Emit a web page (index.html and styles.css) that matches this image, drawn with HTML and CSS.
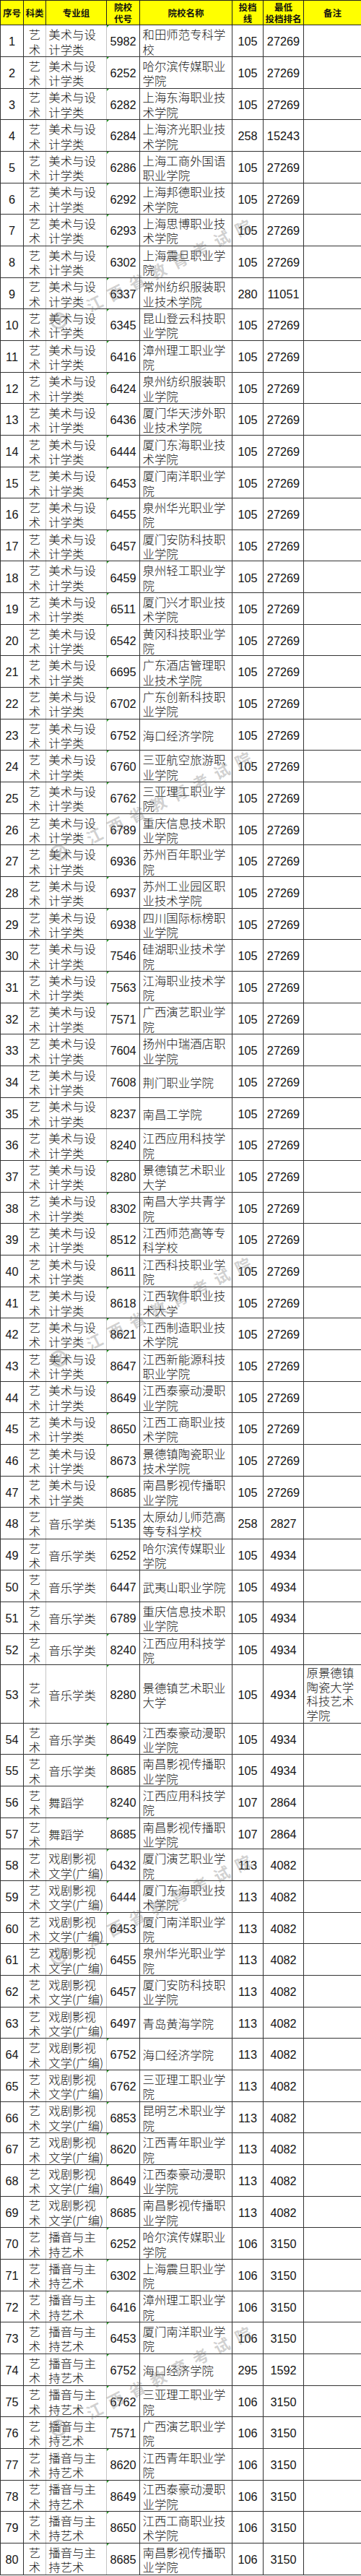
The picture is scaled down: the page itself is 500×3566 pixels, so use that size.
FILE: index.html
```html
<!DOCTYPE html>
<html lang="zh-CN">
<head>
<meta charset="utf-8">
<title>投档线</title>
<link rel="stylesheet" href="styles.css">
</head>
<body>
<div class="sheet">
<table class="grid">
<colgroup>
<col class="c1"><col class="c2"><col class="c3"><col class="c4"><col class="c5"><col class="c6"><col class="c7"><col class="c8">
</colgroup>
<thead>
<tr><th>序号</th><th>科类</th><th>专业组</th><th>院校<br>代号</th><th>院校名称</th><th>投档<br>线</th><th>最低<br>投档排名</th><th>备注</th></tr>
</thead>
<tbody>
<tr><td>1</td><td>艺术</td><td>美术与设计学类</td><td>5982</td><td>和田师范专科学校</td><td>105</td><td>27269</td><td></td></tr>
<tr><td>2</td><td>艺术</td><td>美术与设计学类</td><td>6252</td><td>哈尔滨传媒职业学院</td><td>105</td><td>27269</td><td></td></tr>
<tr><td>3</td><td>艺术</td><td>美术与设计学类</td><td>6282</td><td>上海东海职业技术学院</td><td>105</td><td>27269</td><td></td></tr>
<tr><td>4</td><td>艺术</td><td>美术与设计学类</td><td>6284</td><td>上海济光职业技术学院</td><td>258</td><td>15243</td><td></td></tr>
<tr><td>5</td><td>艺术</td><td>美术与设计学类</td><td>6286</td><td>上海工商外国语职业学院</td><td>105</td><td>27269</td><td></td></tr>
<tr><td>6</td><td>艺术</td><td>美术与设计学类</td><td>6292</td><td>上海邦德职业技术学院</td><td>105</td><td>27269</td><td></td></tr>
<tr><td>7</td><td>艺术</td><td>美术与设计学类</td><td>6293</td><td>上海思博职业技术学院</td><td>105</td><td>27269</td><td></td></tr>
<tr><td>8</td><td>艺术</td><td>美术与设计学类</td><td>6302</td><td>上海震旦职业学院</td><td>105</td><td>27269</td><td></td></tr>
<tr><td>9</td><td>艺术</td><td>美术与设计学类</td><td>6337</td><td>常州纺织服装职业技术学院</td><td>280</td><td>11051</td><td></td></tr>
<tr><td>10</td><td>艺术</td><td>美术与设计学类</td><td>6345</td><td>昆山登云科技职业学院</td><td>105</td><td>27269</td><td></td></tr>
<tr><td>11</td><td>艺术</td><td>美术与设计学类</td><td>6416</td><td>漳州理工职业学院</td><td>105</td><td>27269</td><td></td></tr>
<tr><td>12</td><td>艺术</td><td>美术与设计学类</td><td>6424</td><td>泉州纺织服装职业学院</td><td>105</td><td>27269</td><td></td></tr>
<tr><td>13</td><td>艺术</td><td>美术与设计学类</td><td>6436</td><td>厦门华天涉外职业技术学院</td><td>105</td><td>27269</td><td></td></tr>
<tr><td>14</td><td>艺术</td><td>美术与设计学类</td><td>6444</td><td>厦门东海职业技术学院</td><td>105</td><td>27269</td><td></td></tr>
<tr><td>15</td><td>艺术</td><td>美术与设计学类</td><td>6453</td><td>厦门南洋职业学院</td><td>105</td><td>27269</td><td></td></tr>
<tr><td>16</td><td>艺术</td><td>美术与设计学类</td><td>6455</td><td>泉州华光职业学院</td><td>105</td><td>27269</td><td></td></tr>
<tr><td>17</td><td>艺术</td><td>美术与设计学类</td><td>6457</td><td>厦门安防科技职业学院</td><td>105</td><td>27269</td><td></td></tr>
<tr><td>18</td><td>艺术</td><td>美术与设计学类</td><td>6459</td><td>泉州轻工职业学院</td><td>105</td><td>27269</td><td></td></tr>
<tr><td>19</td><td>艺术</td><td>美术与设计学类</td><td>6511</td><td>厦门兴才职业技术学院</td><td>105</td><td>27269</td><td></td></tr>
<tr><td>20</td><td>艺术</td><td>美术与设计学类</td><td>6542</td><td>黄冈科技职业学院</td><td>105</td><td>27269</td><td></td></tr>
<tr><td>21</td><td>艺术</td><td>美术与设计学类</td><td>6695</td><td>广东酒店管理职业技术学院</td><td>105</td><td>27269</td><td></td></tr>
<tr><td>22</td><td>艺术</td><td>美术与设计学类</td><td>6702</td><td>广东创新科技职业学院</td><td>105</td><td>27269</td><td></td></tr>
<tr><td>23</td><td>艺术</td><td>美术与设计学类</td><td>6752</td><td>海口经济学院</td><td>105</td><td>27269</td><td></td></tr>
<tr><td>24</td><td>艺术</td><td>美术与设计学类</td><td>6760</td><td>三亚航空旅游职业学院</td><td>105</td><td>27269</td><td></td></tr>
<tr><td>25</td><td>艺术</td><td>美术与设计学类</td><td>6762</td><td>三亚理工职业学院</td><td>105</td><td>27269</td><td></td></tr>
<tr><td>26</td><td>艺术</td><td>美术与设计学类</td><td>6789</td><td>重庆信息技术职业学院</td><td>105</td><td>27269</td><td></td></tr>
<tr><td>27</td><td>艺术</td><td>美术与设计学类</td><td>6936</td><td>苏州百年职业学院</td><td>105</td><td>27269</td><td></td></tr>
<tr><td>28</td><td>艺术</td><td>美术与设计学类</td><td>6937</td><td>苏州工业园区职业技术学院</td><td>105</td><td>27269</td><td></td></tr>
<tr><td>29</td><td>艺术</td><td>美术与设计学类</td><td>6938</td><td>四川国际标榜职业学院</td><td>105</td><td>27269</td><td></td></tr>
<tr><td>30</td><td>艺术</td><td>美术与设计学类</td><td>7546</td><td>硅湖职业技术学院</td><td>105</td><td>27269</td><td></td></tr>
<tr><td>31</td><td>艺术</td><td>美术与设计学类</td><td>7563</td><td>江海职业技术学院</td><td>105</td><td>27269</td><td></td></tr>
<tr><td>32</td><td>艺术</td><td>美术与设计学类</td><td>7571</td><td>广西演艺职业学院</td><td>105</td><td>27269</td><td></td></tr>
<tr class="nm"><td>33</td><td>艺术</td><td>美术与设计学类</td><td>7604</td><td>扬州中瑞酒店职业学院</td><td>105</td><td>27269</td><td></td></tr>
<tr class="nm"><td>34</td><td>艺术</td><td>美术与设计学类</td><td>7608</td><td>荆门职业学院</td><td>105</td><td>27269</td><td></td></tr>
<tr class="nm"><td>35</td><td>艺术</td><td>美术与设计学类</td><td>8237</td><td>南昌工学院</td><td>105</td><td>27269</td><td></td></tr>
<tr class="nm"><td>36</td><td>艺术</td><td>美术与设计学类</td><td>8240</td><td>江西应用科技学院</td><td>105</td><td>27269</td><td></td></tr>
<tr><td>37</td><td>艺术</td><td>美术与设计学类</td><td>8280</td><td>景德镇艺术职业大学</td><td>105</td><td>27269</td><td></td></tr>
<tr><td>38</td><td>艺术</td><td>美术与设计学类</td><td>8302</td><td>南昌大学共青学院</td><td>105</td><td>27269</td><td></td></tr>
<tr><td>39</td><td>艺术</td><td>美术与设计学类</td><td>8512</td><td>江西师范高等专科学校</td><td>105</td><td>27269</td><td></td></tr>
<tr><td>40</td><td>艺术</td><td>美术与设计学类</td><td>8611</td><td>江西科技职业学院</td><td>105</td><td>27269</td><td></td></tr>
<tr><td>41</td><td>艺术</td><td>美术与设计学类</td><td>8618</td><td>江西软件职业技术大学</td><td>105</td><td>27269</td><td></td></tr>
<tr><td>42</td><td>艺术</td><td>美术与设计学类</td><td>8621</td><td>江西制造职业技术学院</td><td>105</td><td>27269</td><td></td></tr>
<tr><td>43</td><td>艺术</td><td>美术与设计学类</td><td>8647</td><td>江西新能源科技职业学院</td><td>105</td><td>27269</td><td></td></tr>
<tr><td>44</td><td>艺术</td><td>美术与设计学类</td><td>8649</td><td>江西泰豪动漫职业学院</td><td>105</td><td>27269</td><td></td></tr>
<tr><td>45</td><td>艺术</td><td>美术与设计学类</td><td>8650</td><td>江西工商职业技术学院</td><td>105</td><td>27269</td><td></td></tr>
<tr><td>46</td><td>艺术</td><td>美术与设计学类</td><td>8673</td><td>景德镇陶瓷职业技术学院</td><td>105</td><td>27269</td><td></td></tr>
<tr><td>47</td><td>艺术</td><td>美术与设计学类</td><td>8685</td><td>南昌影视传播职业学院</td><td>105</td><td>27269</td><td></td></tr>
<tr class="nm"><td>48</td><td>艺术</td><td>音乐学类</td><td>5135</td><td>太原幼儿师范高等专科学校</td><td>258</td><td>2827</td><td></td></tr>
<tr class="nm"><td>49</td><td>艺术</td><td>音乐学类</td><td>6252</td><td>哈尔滨传媒职业学院</td><td>105</td><td>4934</td><td></td></tr>
<tr class="nm"><td>50</td><td>艺术</td><td>音乐学类</td><td>6447</td><td>武夷山职业学院</td><td>105</td><td>4934</td><td></td></tr>
<tr class="nm"><td>51</td><td>艺术</td><td>音乐学类</td><td>6789</td><td>重庆信息技术职业学院</td><td>105</td><td>4934</td><td></td></tr>
<tr><td>52</td><td>艺术</td><td>音乐学类</td><td>8240</td><td>江西应用科技学院</td><td>105</td><td>4934</td><td></td></tr>
<tr class="tall"><td>53</td><td>艺术</td><td>音乐学类</td><td>8280</td><td>景德镇艺术职业大学</td><td>105</td><td>4934</td><td class="remark">原景德镇陶瓷大学科技艺术学院</td></tr>
<tr><td>54</td><td>艺术</td><td>音乐学类</td><td>8649</td><td>江西泰豪动漫职业学院</td><td>105</td><td>4934</td><td></td></tr>
<tr><td>55</td><td>艺术</td><td>音乐学类</td><td>8685</td><td>南昌影视传播职业学院</td><td>105</td><td>4934</td><td></td></tr>
<tr><td>56</td><td>艺术</td><td>舞蹈学</td><td>8240</td><td>江西应用科技学院</td><td>107</td><td>2864</td><td></td></tr>
<tr><td>57</td><td>艺术</td><td>舞蹈学</td><td>8685</td><td>南昌影视传播职业学院</td><td>107</td><td>2864</td><td></td></tr>
<tr><td>58</td><td>艺术</td><td>戏剧影视文学(广编)</td><td>6432</td><td>厦门演艺职业学院</td><td>113</td><td>4082</td><td></td></tr>
<tr><td>59</td><td>艺术</td><td>戏剧影视文学(广编)</td><td>6444</td><td>厦门东海职业技术学院</td><td>113</td><td>4082</td><td></td></tr>
<tr><td>60</td><td>艺术</td><td>戏剧影视文学(广编)</td><td>6453</td><td>厦门南洋职业学院</td><td>113</td><td>4082</td><td></td></tr>
<tr><td>61</td><td>艺术</td><td>戏剧影视文学(广编)</td><td>6455</td><td>泉州华光职业学院</td><td>113</td><td>4082</td><td></td></tr>
<tr class="nm"><td>62</td><td>艺术</td><td>戏剧影视文学(广编)</td><td>6457</td><td>厦门安防科技职业学院</td><td>113</td><td>4082</td><td></td></tr>
<tr class="nm"><td>63</td><td>艺术</td><td>戏剧影视文学(广编)</td><td>6497</td><td>青岛黄海学院</td><td>113</td><td>4082</td><td></td></tr>
<tr><td>64</td><td>艺术</td><td>戏剧影视文学(广编)</td><td>6752</td><td>海口经济学院</td><td>113</td><td>4082</td><td></td></tr>
<tr><td>65</td><td>艺术</td><td>戏剧影视文学(广编)</td><td>6762</td><td>三亚理工职业学院</td><td>113</td><td>4082</td><td></td></tr>
<tr><td>66</td><td>艺术</td><td>戏剧影视文学(广编)</td><td>6853</td><td>昆明艺术职业学院</td><td>113</td><td>4082</td><td></td></tr>
<tr><td>67</td><td>艺术</td><td>戏剧影视文学(广编)</td><td>8620</td><td>江西青年职业学院</td><td>113</td><td>4082</td><td></td></tr>
<tr><td>68</td><td>艺术</td><td>戏剧影视文学(广编)</td><td>8649</td><td>江西泰豪动漫职业学院</td><td>113</td><td>4082</td><td></td></tr>
<tr><td>69</td><td>艺术</td><td>戏剧影视文学(广编)</td><td>8685</td><td>南昌影视传播职业学院</td><td>113</td><td>4082</td><td></td></tr>
<tr><td>70</td><td>艺术</td><td>播音与主持艺术</td><td>6252</td><td>哈尔滨传媒职业学院</td><td>106</td><td>3150</td><td></td></tr>
<tr><td>71</td><td>艺术</td><td>播音与主持艺术</td><td>6302</td><td>上海震旦职业学院</td><td>106</td><td>3150</td><td></td></tr>
<tr><td>72</td><td>艺术</td><td>播音与主持艺术</td><td>6416</td><td>漳州理工职业学院</td><td>106</td><td>3150</td><td></td></tr>
<tr><td>73</td><td>艺术</td><td>播音与主持艺术</td><td>6453</td><td>厦门南洋职业学院</td><td>106</td><td>3150</td><td></td></tr>
<tr><td>74</td><td>艺术</td><td>播音与主持艺术</td><td>6752</td><td>海口经济学院</td><td>295</td><td>1592</td><td></td></tr>
<tr><td>75</td><td>艺术</td><td>播音与主持艺术</td><td>6762</td><td>三亚理工职业学院</td><td>106</td><td>3150</td><td></td></tr>
<tr><td>76</td><td>艺术</td><td>播音与主持艺术</td><td>7571</td><td>广西演艺职业学院</td><td>106</td><td>3150</td><td></td></tr>
<tr><td>77</td><td>艺术</td><td>播音与主持艺术</td><td>8620</td><td>江西青年职业学院</td><td>106</td><td>3150</td><td></td></tr>
<tr><td>78</td><td>艺术</td><td>播音与主持艺术</td><td>8649</td><td>江西泰豪动漫职业学院</td><td>106</td><td>3150</td><td></td></tr>
<tr><td>79</td><td>艺术</td><td>播音与主持艺术</td><td>8650</td><td>江西工商职业技术学院</td><td>106</td><td>3150</td><td></td></tr>
<tr><td>80</td><td>艺术</td><td>播音与主持艺术</td><td>8685</td><td>南昌影视传播职业学院</td><td>106</td><td>3150</td><td></td></tr>
</tbody>
</table>

<div class="wm wm1"><svg class="wm-logo" viewBox="0 0 24 24" aria-hidden="true"><circle cx="12" cy="12" r="10" fill="none" stroke="currentColor" stroke-width="3"/><path d="M7 13 L11 17 L18 7" fill="none" stroke="currentColor" stroke-width="3"/></svg><span class="wm-text">江西省教育考试院</span></div>
<div class="wm wm2"><svg class="wm-logo" viewBox="0 0 24 24" aria-hidden="true"><circle cx="12" cy="12" r="10" fill="none" stroke="currentColor" stroke-width="3"/><path d="M7 13 L11 17 L18 7" fill="none" stroke="currentColor" stroke-width="3"/></svg><span class="wm-text">江西省教育考试院</span></div>
<div class="wm wm3"><svg class="wm-logo" viewBox="0 0 24 24" aria-hidden="true"><circle cx="12" cy="12" r="10" fill="none" stroke="currentColor" stroke-width="3"/><path d="M7 13 L11 17 L18 7" fill="none" stroke="currentColor" stroke-width="3"/></svg><span class="wm-text">江西省教育考试院</span></div>
<div class="wm wm4"><svg class="wm-logo" viewBox="0 0 24 24" aria-hidden="true"><circle cx="12" cy="12" r="10" fill="none" stroke="currentColor" stroke-width="3"/><path d="M7 13 L11 17 L18 7" fill="none" stroke="currentColor" stroke-width="3"/></svg><span class="wm-text">江西省教育考试院</span></div>
<div class="wm wm5"><svg class="wm-logo" viewBox="0 0 24 24" aria-hidden="true"><circle cx="12" cy="12" r="10" fill="none" stroke="currentColor" stroke-width="3"/><path d="M7 13 L11 17 L18 7" fill="none" stroke="currentColor" stroke-width="3"/></svg><span class="wm-text">江西省教育考试院</span></div>
</div>
</body>
</html>
```

FILE: styles.css
```css
html, body {
  margin: 0;
  padding: 0;
  background: #ffffff;
}

.sheet {
  position: relative;
  width: 500px;
}

.grid {
  border-collapse: collapse;
  table-layout: fixed;
  width: 500px;
  font-family: "Noto Sans CJK SC", sans-serif;
  font-size: 16.4px;
  color: #161616;
}

.c1 { width: 32px; }
.c2 { width: 31px; }
.c3 { width: 84px; }
.c4 { width: 46px; }
.c5 { width: 128px; }
.c6 { width: 43px; }
.c7 { width: 56px; }
.c8 { width: 80px; }

.grid th,
.grid td {
  border: 1px solid #333333;
  padding: 0;
}

.grid thead tr {
  height: 34.33px;
}

.grid th {
  background: #ffff00;
  font-weight: 700;
  font-size: 12.5px;
  line-height: 16px;
  text-align: center;
  vertical-align: middle;
  color: #111111;
  border-color: #222222;
}

.grid tbody tr {
  height: 43.67px;
}

.grid td {
  line-height: 20.4px;
  padding-top: 1.8px;
  text-align: center;
  vertical-align: middle;
  font-weight: 300;
}

/* numeric columns use Arial-metric digits */
.grid td:nth-child(1),
.grid td:nth-child(4),
.grid td:nth-child(6),
.grid td:nth-child(7) {
  font-family: "Liberation Sans", sans-serif;
  font-weight: 400;
  font-size: 16.3px;
}

.grid td:nth-child(2) {
  border-right-color: #c4c4c4;
}

.grid td:nth-child(3) {
  text-align: left;
  padding-left: 3.3px;
  border-right-color: #c4c4c4;
}

.grid td:nth-child(4) {
  position: relative;
}

.grid td:nth-child(4)::before {
  content: "";
  position: absolute;
  left: 0;
  top: 0;
  width: 0;
  height: 0;
  border-top: 3px solid #1f9a1f;
  border-right: 3px solid transparent;
}

.grid tr.nm td:nth-child(4)::before {
  display: none;
}

.grid td:nth-child(5),
.grid td:nth-child(8) {
  text-align: left;
  padding-left: 3.6px;
}

.grid tbody tr.tall {
  height: 80.33px;
}

.grid td.remark {
  vertical-align: top;
  padding-top: 0.6px;
  line-height: 19.5px;
}

/* watermark overlays */
.wm {
  position: absolute;
  left: 238px;
  transform: translate(-50%, -50%) rotate(-27deg);
  white-space: nowrap;
  font-family: "Noto Sans CJK SC", sans-serif;
  font-weight: 700;
  font-size: 22px;
  line-height: 1;
  letter-spacing: 11px;
  color: rgba(110, 110, 110, 0.33);
  pointer-events: none;
}

.wm-text {
  display: block;
}

.wm-logo {
  position: absolute;
  left: -56px;
  top: 50%;
  width: 24px;
  height: 24px;
  margin-top: -12px;
}

.wm1 { top: 364px; }
.wm2 { top: 1101px; }
.wm3 { top: 1801px; }
.wm4 { top: 2628px; }
.wm5 { top: 3281px; }
```
